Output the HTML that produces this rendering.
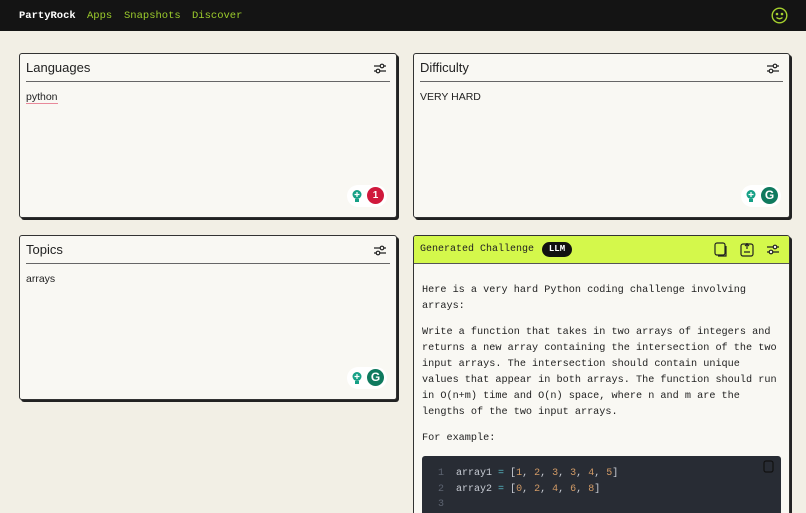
<!DOCTYPE html><html><head><style>
*{box-sizing:border-box;margin:0;padding:0}
html,body{width:806px;height:513px;overflow:hidden}
body{background:#f2efe5;font-family:"Liberation Sans",sans-serif;position:relative}
.hdr{position:absolute;left:0;top:0;width:806px;height:31px;background:#141414;font-family:"Liberation Mono",monospace;font-size:10.5px;}
.hdr span{position:absolute;top:10px}
.card{position:absolute;background:#f9f8f3;border:1px solid #333;border-radius:3px;box-shadow:2px 2px 0 #222}
.title{position:absolute;left:6px;top:6px;font-size:13px;color:#222}
.line{position:absolute;left:6px;right:6px;top:27px;height:1px;background:#666}
.txt{position:absolute;left:6px;top:37px;font-size:10.5px;color:#222}
.tune{position:absolute;right:10px;top:9px}
.badge{position:absolute;width:40px;height:22px;border-radius:11px;background:#fff;}
.mono{font-family:"Liberation Mono",monospace}
</style></head><body>
<div class="hdr"><span style="left:19px;color:#fff;font-weight:bold">PartyRock</span><span style="left:87px;color:#9ccc2c">Apps</span><span style="left:124px;color:#9ccc2c">Snapshots</span><span style="left:192px;color:#9ccc2c">Discover</span>
<svg style="position:absolute;left:771px;top:7px" width="17" height="17" viewBox="0 0 17 17" fill="none" stroke="#a6d12e" stroke-width="1.4"><circle cx="8.5" cy="8.5" r="7.3"/><circle cx="6" cy="7" r=".6" fill="#a6d12e"/><circle cx="11" cy="7" r=".6" fill="#a6d12e"/><path d="M5.5 10.5q3 2.5 6 0"/></svg></div>

<svg width="0" height="0" style="position:absolute"><defs><g id="tn" stroke="#222" stroke-width="1.2" fill="none"><path d="M0 3h12M0 8h12"/><circle cx="8" cy="3" r="1.8" fill="#f9f8f3"/><circle cx="4" cy="8" r="1.8" fill="#f9f8f3"/></g></defs></svg>

<div class="card" style="left:19px;top:53px;width:378px;height:165px">
<div class="title">Languages</div><svg class="tune" width="12" height="11"><use href="#tn"/></svg><div class="line"></div>
<div class="txt" style="border-bottom:1.5px solid #e8899a;line-height:12px">python</div>
<div class="badge" style="left:327px;top:131px"><svg style="position:absolute;left:4px;top:4px" width="12" height="14"><circle cx="6" cy="5.5" r="4.5" fill="#15a086"/><rect x="4" y="10" width="4" height="3" fill="#15a086"/><path d="M6 3v5M3.5 5.5h5" stroke="#fff" stroke-width="1.2"/></svg><div style="position:absolute;left:20px;top:2px;width:17px;height:17px;border-radius:50%;background:#d0193c;color:#fff;font-size:10px;font-weight:bold;text-align:center;line-height:17px">1</div></div>
</div>

<div class="card" style="left:413px;top:53px;width:377px;height:165px">
<div class="title">Difficulty</div><svg class="tune" width="12" height="11"><use href="#tn"/></svg><div class="line"></div>
<div class="txt">VERY HARD</div>
<div class="badge" style="left:327px;top:131px"><svg style="position:absolute;left:4px;top:4px" width="12" height="14"><circle cx="6" cy="5.5" r="4.5" fill="#15a086"/><rect x="4" y="10" width="4" height="3" fill="#15a086"/><path d="M6 3v5M3.5 5.5h5" stroke="#fff" stroke-width="1.2"/></svg><div style="position:absolute;left:20px;top:2px;width:17px;height:17px;border-radius:50%;background:#0f7a5e;color:#fff;font-size:12px;font-weight:bold;text-align:center;line-height:17px">G</div></div>
</div>

<div class="card" style="left:19px;top:235px;width:378px;height:165px">
<div class="title">Topics</div><svg class="tune" width="12" height="11"><use href="#tn"/></svg><div class="line"></div>
<div class="txt">arrays</div>
<div class="badge" style="left:327px;top:131px"><svg style="position:absolute;left:4px;top:4px" width="12" height="14"><circle cx="6" cy="5.5" r="4.5" fill="#15a086"/><rect x="4" y="10" width="4" height="3" fill="#15a086"/><path d="M6 3v5M3.5 5.5h5" stroke="#fff" stroke-width="1.2"/></svg><div style="position:absolute;left:20px;top:2px;width:17px;height:17px;border-radius:50%;background:#0f7a5e;color:#fff;font-size:12px;font-weight:bold;text-align:center;line-height:17px">G</div></div>
</div>

<div class="card" style="left:413px;top:235px;width:377px;height:300px;overflow:hidden">
<div style="position:absolute;left:0;top:0;right:0;height:28px;background:#d4f84b;border-bottom:1px solid #555"></div>
<div class="mono" style="position:absolute;left:6px;top:8px;font-size:10px;color:#222">Generated Challenge</div>
<div class="mono" style="position:absolute;left:128px;top:6px;width:30px;height:15px;border-radius:8px;background:#111;color:#fff;font-size:9px;font-weight:bold;text-align:center;line-height:15px">LLM</div>
<svg style="position:absolute;left:300px;top:6px" width="14" height="15" fill="none" stroke="#222" stroke-width="1.2"><rect x="1" y="1" width="10" height="12" rx="2"/><path d="M4 14h8V4"/></svg>
<svg style="position:absolute;left:326px;top:6px" width="14" height="15" fill="none" stroke="#222" stroke-width="1.2"><rect x="1" y="2" width="12" height="12" rx="2"/><path d="M7 1v6M5 4l2-2 2 2M4 10h6"/></svg>
<svg style="position:absolute;left:353px;top:8px" width="12" height="11"><use href="#tn"/></svg>
<div class="mono" style="position:absolute;left:8px;top:47px;width:358px;font-size:10.2px;line-height:16px;color:#222">
<p>Here is a very hard Python coding challenge involving arrays:</p>
<p style="margin-top:10px">Write a function that takes in two arrays of integers and returns a new array containing the intersection of the two input arrays. The intersection should contain unique values that appear in both arrays. The function should run in O(n+m) time and O(n) space, where n and m are the lengths of the two input arrays.</p>
<p style="margin-top:10px">For example:</p></div>
<div class="mono" style="position:absolute;left:8px;top:220px;width:359px;height:80px;background:#282c34;border-radius:3px;font-size:10px;line-height:15.5px;padding:10px 0 0 16px;color:#c8ccd4">
<div><span style="color:#5c6370">1</span>&nbsp; array1 <span style="color:#56b6c2">=</span> [<span style="color:#d19a66">1</span>, <span style="color:#d19a66">2</span>, <span style="color:#d19a66">3</span>, <span style="color:#d19a66">3</span>, <span style="color:#d19a66">4</span>, <span style="color:#d19a66">5</span>]</div>
<div><span style="color:#5c6370">2</span>&nbsp; array2 <span style="color:#56b6c2">=</span> [<span style="color:#d19a66">0</span>, <span style="color:#d19a66">2</span>, <span style="color:#d19a66">4</span>, <span style="color:#d19a66">6</span>, <span style="color:#d19a66">8</span>]</div>
<div><span style="color:#5c6370">3</span></div>
<svg style="position:absolute;right:6px;top:4px" width="12" height="14" fill="none" stroke="#111" stroke-width="1.2"><rect x="1" y="1" width="9" height="11" rx="2"/></svg>
</div>
</div>
</body></html>
